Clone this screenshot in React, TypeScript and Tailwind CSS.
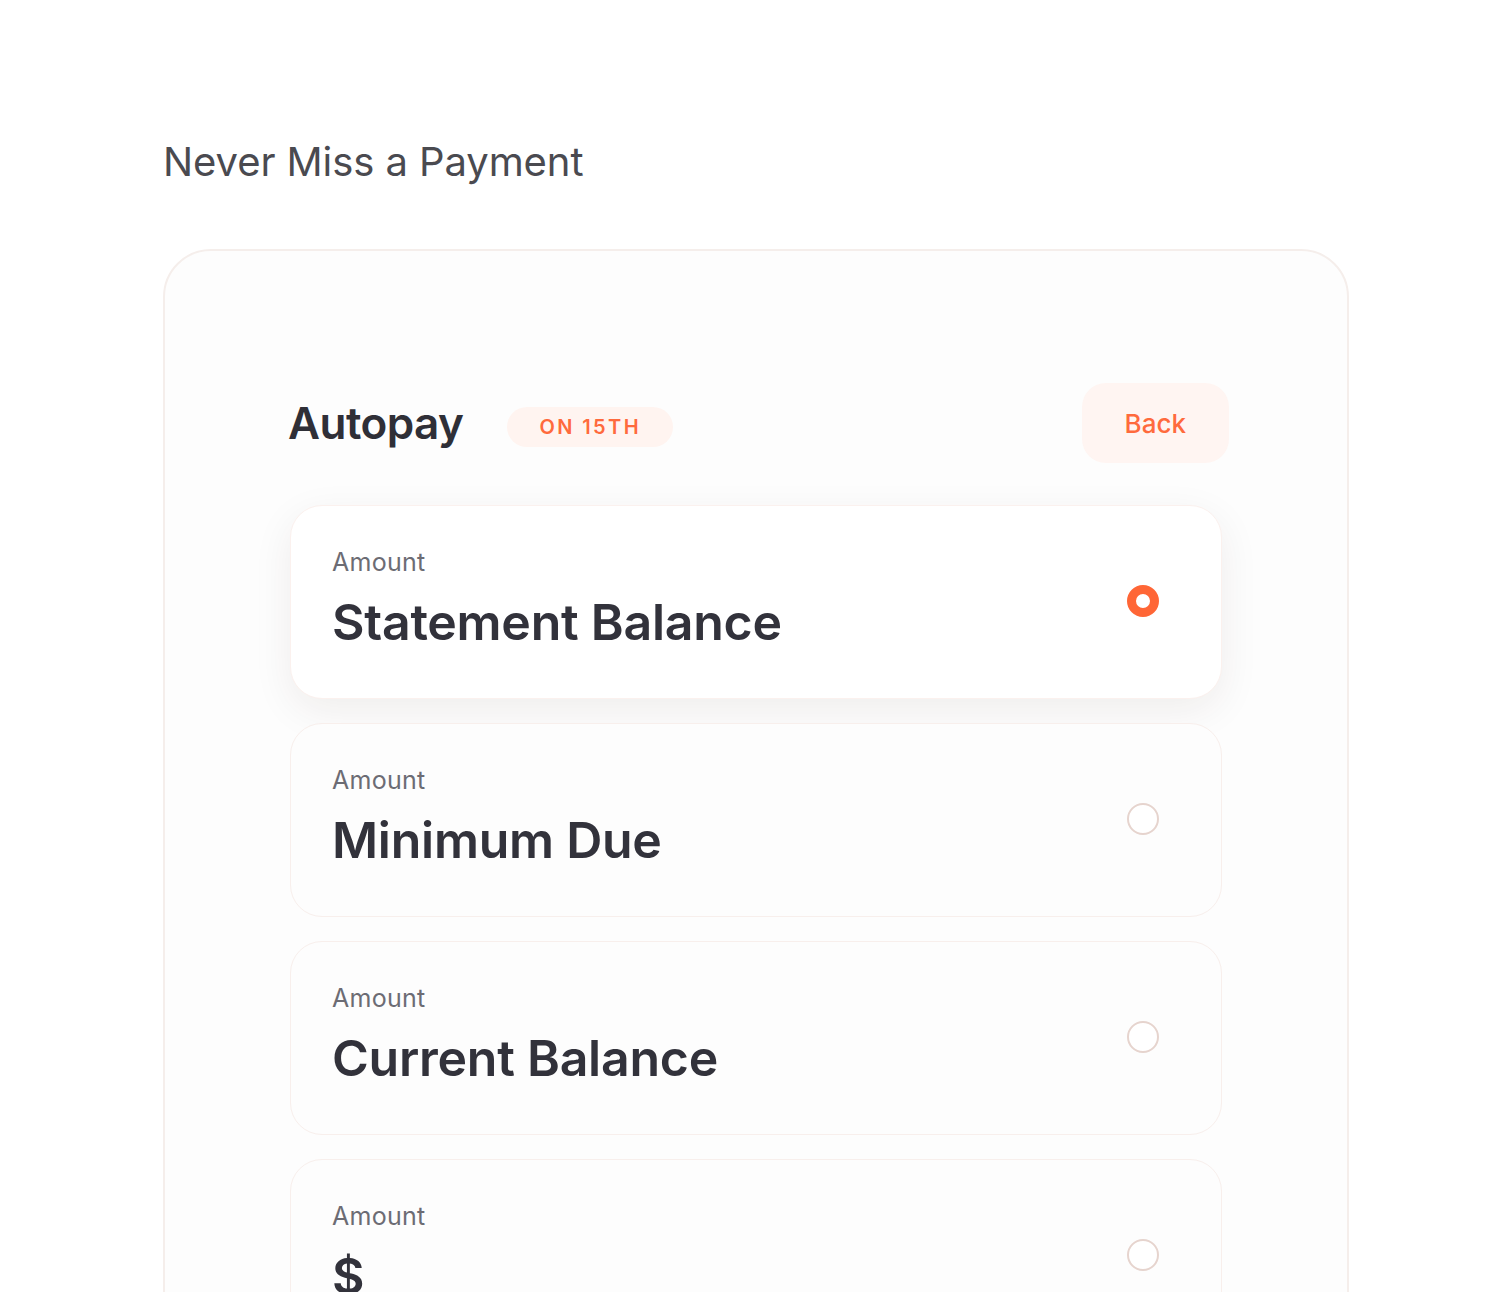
const OPTIONS = [
  { label: 'Amount', title: 'Statement Balance', selected: true },
  { label: 'Amount', title: 'Minimum Due', selected: false },
  { label: 'Amount', title: 'Current Balance', selected: false },
  { label: 'Amount', title: '$', selected: false },
];

export default function App() {
  return (
    <div
      className="min-h-screen bg-white px-[163px] pt-[138px] pb-20"
      style={{ fontFamily: 'Inter, "Noto Sans", sans-serif' }}
    >
      {/* Title */}
      <h1 className="text-[40px] leading-[48px] font-normal text-[#4a4a50] tracking-[-0.002em]">
        Never Miss a Payment
      </h1>

      {/* Card */}
      <div className="mt-[63px] rounded-[48px] border-2 border-[#f5eeeb] bg-[#fdfdfd] pt-[132px] pb-24 pl-[123px] pr-[118px]">
        {/* Header */}
        <div className="flex items-center justify-between">
          <div className="flex items-center gap-[44px]">
            <h2 className="text-[44px] leading-[56px] font-semibold tracking-[-0.012em] text-[#2f2f37]">
              Autopay
            </h2>
            <span className="mt-2 h-10 flex items-center rounded-full bg-[#fff4f0] px-8 text-[20px] font-semibold tracking-[0.12em] text-[#ff6a3d]">
              ON 15TH
            </span>
          </div>
          <button className="h-20 rounded-3xl bg-[#fff5f2] px-[43px] text-[26px] font-medium text-[#ff6a3d]">
            Back
          </button>
        </div>

        {/* Options */}
        <div className="mt-[42px] ml-[2px] mr-[7px] flex flex-col gap-6">
          {OPTIONS.map((opt, i) => (
            <div
              key={i}
              className={`flex items-center justify-between rounded-[32px] border pl-[41px] pr-[62px] pt-10 pb-12 ${
                opt.selected
                  ? 'bg-white border-[#fbf1ee] shadow-[0_12px_40px_rgba(60,30,20,0.07)]'
                  : 'bg-[#fdfdfd] border-[#f8efec]'
              }`}
            >
              <div className="flex flex-col gap-4">
                <span className="text-[25px] leading-8 tracking-[0.01em] text-[#6c6c74]">{opt.label}</span>
                <span className="text-[50px] leading-[56px] font-semibold tracking-[-0.005em] text-[#32323b]">
                  {opt.title}
                </span>
              </div>
              {opt.selected ? (
                <span className="mt-1.5 h-8 w-8 rounded-full border-[9px] border-[#ff6636] bg-white" />
              ) : (
                <span className="mt-1.5 h-8 w-8 rounded-full border-2 border-[#e6d4ce] bg-white" />
              )}
            </div>
          ))}
        </div>
      </div>
    </div>
  );
}
